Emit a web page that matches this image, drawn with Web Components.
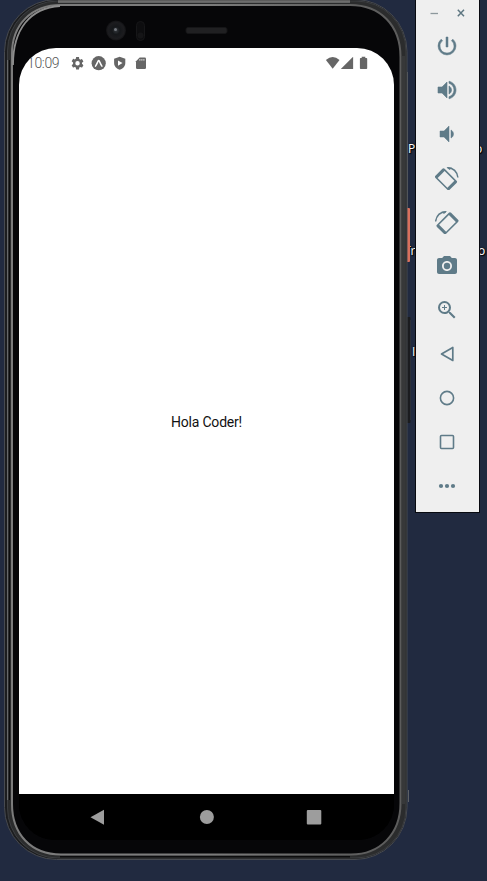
<!DOCTYPE html>
<html lang="es">
<head>
<meta charset="utf-8">
<title>Emulador</title>
<style>
html,body{margin:0;padding:0;width:487px;height:881px;overflow:hidden;background:#212a40}
</style>
</head>
<body>
<emulator-desktop>
  <desktop-label style="left:408px;top:141px">P</desktop-label>
  <desktop-label style="left:475px;top:141px">o</desktop-label>
  <desktop-label style="left:404px;top:243px">Tr</desktop-label>
  <desktop-label style="left:478px;top:243px">o</desktop-label>
  <desktop-label style="left:412px;top:344px">I</desktop-label>
  <phone-device>
    <status-bar slot="status" time="10:09"></status-bar>
    <span>Hola Coder!</span>
    <nav-bar slot="nav"></nav-bar>
  </phone-device>
  <emulator-toolbar>
    <tool-button name="power"></tool-button>
    <tool-button name="up"></tool-button>
    <tool-button name="down"></tool-button>
    <tool-button name="left"></tool-button>
    <tool-button name="right"></tool-button>
    <tool-button name="camera"></tool-button>
    <tool-button name="zoom"></tool-button>
    <tool-button name="back"></tool-button>
    <tool-button name="home"></tool-button>
    <tool-button name="overview"></tool-button>
    <tool-button name="more"></tool-button>
  </emulator-toolbar>
</emulator-desktop>
<script>
function define(name, render){
  customElements.define(name, class extends HTMLElement{
    connectedCallback(){
      if(this.shadowRoot) return;
      this.attachShadow({mode:'open'}).innerHTML = render(this);
    }
  });
}

define('emulator-desktop', () => `
<style>
:host{display:block;position:relative;width:487px;height:881px;overflow:hidden;background:#212a40;font-family:Roboto,"Liberation Sans",sans-serif}
</style><slot></slot>`);

define('desktop-label', () => `
<style>
:host{display:block;position:absolute;font:12px/15px "Open Sans","Noto Sans",sans-serif;color:#fff;text-shadow:1px 1px 1px #000,0 0 2px #000}
</style><slot></slot>`);

define('phone-device', () => `
<style>
:host{display:block;position:absolute;left:0;top:0;width:415px;height:881px}
.body{position:absolute;left:0;top:0}
.screen{position:relative;box-sizing:border-box;width:375px;height:792px;margin:48px 0 0 19px;display:flex;flex-direction:column;border-radius:37px 37px 36px 36px;overflow:hidden;background:#000}
main{flex:1;display:flex;align-items:center;justify-content:center;background:#fff;color:#111;font-size:14px;line-height:16px;padding-bottom:28px;letter-spacing:-.2px}
</style>
<svg class="body" width="415" height="881" viewBox="0 0 415 881">
  <defs>
    <linearGradient id="edge" x1="0" x2="1" y1="0" y2="0">
      <stop offset="0" stop-color="#7c7c7c"/><stop offset=".5" stop-color="#7c7c7c"/>
      <stop offset=".85" stop-color="#606060"/><stop offset="1" stop-color="#5c5c5c"/>
    </linearGradient>
    <radialGradient id="lens"><stop offset="0" stop-color="#34383d"/><stop offset=".4" stop-color="#15171a"/><stop offset=".8" stop-color="#1c1c1f"/><stop offset="1" stop-color="#111113"/></radialGradient>
  </defs>
  <path d="M407.500 72V208M408.500 790v12" stroke="#5d6065" fill="none"/>
  <rect x="406" y="317" width="4.500" height="106" rx="1" fill="#1b1c1f"/>
  <path d="M410.500 320v100" stroke="#2b2f38"/>
  <rect x="406" y="208" width="4" height="54" rx="1" fill="#d9705d"/>
  <rect x="4.500" y="-.5" width="402.500" height="860" rx="52" fill="#1c1d1f" stroke="#474a50"/>
  <rect x="7.500" y="1" width="398.500" height="857" rx="50" fill="#2b2c2d" stroke="#3c3e41"/>
  <path d="M58 .8H350" stroke="#6c6c6c" stroke-width="1.200"/>
  <path d="M58 2H350" stroke="#777" stroke-width="1.500"/>
  <path d="M7.500 60V800" stroke="#66686b"/>
  <path d="M9.500 60V800" stroke="#0d0d0e"/>
  <path d="M12 804V54C12 25 31 5 61 5H350C380 5 400.500 25 400.500 57V803C400.500 834 380 854.500 351 854.500H61C31 854.500 12 834 12 804Z" fill="#060608" stroke="url(#edge)" stroke-width="2"/>
  <path d="M13 65C13 29 30 8 60 6" fill="none" stroke="#8d8d8d" stroke-width="1.800"/>
  <path d="M403.500 56V804" stroke="#373839" stroke-width="3.500"/>
  <path d="M60 856.700H350" stroke="#0c0c0d" stroke-width="1.500"/>
  <circle cx="116" cy="30.500" r="10" fill="url(#lens)"/>
  <circle cx="115.500" cy="29.500" r="1.500" fill="#73777e"/>
  <rect x="136.500" y="21.500" width="8" height="19" rx="4" fill="#0d0d0f" stroke="#161618"/>
  <circle cx="140.500" cy="35.500" r="3" fill="#151517"/>
  <rect x="186" y="27.500" width="41" height="6" rx="2" fill="#202022" stroke="#151517"/>
</svg>
<div class="screen"><slot name="status"></slot><main><slot></slot></main><slot name="nav"></slot></div>`);

define('status-bar', el => `
<style>
:host{display:flex;height:30px;box-sizing:border-box;padding-left:8px;background:#fff;color:#555;font-size:14px;font-weight:300;line-height:31px}
time{width:43px;letter-spacing:-.35px;white-space:nowrap}
svg{display:block}
</style>
<time>${el.getAttribute('time')}</time>
<svg width="324" height="30" viewBox="70 48 324 30" fill="#666">
  <path transform="translate(70.100 55.800) scale(.62)" d="M19.140 12.940c.04-.3.060-.61.060-.94s-.02-.64-.07-.94l2.030-1.580a.49.49 0 0 0 .12-.61l-1.920-3.320a.49.49 0 0 0-.59-.22l-2.390.96a7 7 0 0 0-1.620-.94l-.36-2.540A.48.48 0 0 0 13.920 2h-3.840a.48.48 0 0 0-.48.410l-.36 2.540a7 7 0 0 0-1.620.94l-2.390-.96a.48.48 0 0 0-.59.220L2.720 8.470a.48.48 0 0 0 .12.610l2.030 1.580a6.500 6.500 0 0 0 0 2.680l-2.030 1.580a.49.49 0 0 0-.12.610l1.920 3.320c.12.220.37.290.59.220l2.390-.96c.5.380 1.030.7 1.620.94l.36 2.540c.05.240.24.410.48.410h3.840c.24 0 .44-.17.480-.41l.36-2.540a7 7 0 0 0 1.620-.94l2.390.96c.22.080.47 0 .59-.22l1.920-3.320a.48.48 0 0 0-.12-.61zM12 15.600a3.600 3.600 0 1 1 0-7.200 3.600 3.600 0 0 1 0 7.200z"/>
  <circle cx="98.700" cy="63.200" r="7.100"/>
  <path d="M95.500 66.100C96.700 64.600 97.400 62.500 98.200 60.900Q98.700 60.100 99.200 60.900C100 62.500 100.700 64.600 101.900 66.100" fill="none" stroke="#fff" stroke-width="1.500" stroke-linecap="round"/>
  <path d="M119.700 56.700l5.600 2v4.300c0 3.100-2.300 5.700-5.600 6.700-3.300-1-5.600-3.600-5.600-6.700v-4.300z"/>
  <path d="M118 60.400l4.500 2.700-4.500 2.700z" fill="#fff"/>
  <path d="M139.700 57.600h5q1.300 0 1.300 1.300v8.900q0 1.200-1.300 1.200h-7.400q-1.300 0-1.300-1.200v-6.500z"/>
  <path d="M139.900 59v1.700M141.900 59v1.700M143.900 59v1.700" stroke="#fff" stroke-width=".8"/>
  <path d="M332.700 68.700l-6.800-8.800q6.800-5.800 13.600 0z"/>
  <path d="M353.100 56.800v12.200h-12.300z"/>
  <path d="M361.700 58v-1.200h3.600V58h1.100q.8 0 .8.800v9.400q0 .8-.8.800h-5.700q-.8 0-.8-.8v-9.400q0-.8.800-.8z"/>
</svg>`);

define('nav-bar', () => `
<style>
:host{display:flex;flex:none;height:46px;box-sizing:border-box;padding:0 62px;justify-content:space-between;align-items:center;background:#000}
svg{fill:#9d9d9d}
</style>
<svg width="32" height="32"><path d="M9.500 16.200L23 8.800v15z"/></svg>
<svg width="32" height="32"><circle cx="15.900" cy="16" r="7"/></svg>
<svg width="32" height="32"><rect x="6.800" y="9" width="14.500" height="14.500" rx="1"/></svg>`);

define('emulator-toolbar', () => `
<style>
:host{position:absolute;left:415px;top:-1px;width:65px;height:514px;box-sizing:border-box;border:1px solid #080a10;background:#efefef;display:flex;flex-direction:column;align-items:center}
header{height:24px;flex:none;display:block}
svg{display:block}
</style>
<header><svg width="63" height="24" viewBox="416 0 63 24" fill="none">
<path d="M430.500 13.500h7.500" stroke="#8d989d" stroke-width="1.300"/>
<path d="M457.800 9.800l6.200 6.400M464 9.800l-6.200 6.400" stroke="#5d7681" stroke-width="1.500"/>
</svg></header><slot></slot>`);

/* Tilted handset with a curved arrow over its upper corner. */
const rotated = `<g transform="translate(11 13.300) rotate(45)">
<rect x="-10" y="-6.500" width="20" height="13" rx="1.600" fill="#5f7b88"/>
<rect x="-6.900" y="-4.900" width="13.800" height="9.800" fill="#efefef"/></g>
<path d="M12.500 1.700Q21.500 1.900 22.900 11.500" fill="none" stroke="#5f7b88" stroke-width="1.500"/>
<path d="M11.500 1l5.500.7-2.500 2.300z" fill="#5f7b88"/>`;
const icons = {
  power:'<path stroke="#5f7b88" stroke-width=".5" d="M13 3h-2v10h2V3zm4.830 2.170l-1.420 1.420A6.920 6.920 0 0 1 19 12c0 3.870-3.130 7-7 7A6.995 6.995 0 0 1 7.580 6.580L6.170 5.170A8.932 8.932 0 0 0 3 12a9 9 0 0 0 18 0c0-2.740-1.230-5.180-3.170-6.830z"/>',
  up:'<path stroke="#5f7b88" stroke-width=".6" d="M3 9v6h4l5 5V4L7 9H3zm13.500 3c0-1.770-1.020-3.290-2.500-4.030v8.050c1.480-.73 2.500-2.250 2.500-4.020zM14 3.230v2.060c2.890.86 5 3.540 5 6.710s-2.110 5.850-5 6.710v2.060c4.010-.91 7-4.490 7-8.770s-2.990-7.860-7-8.770z"/>',
  down:'<path stroke="#5f7b88" stroke-width=".5" d="M18.500 12c0-1.770-1.020-3.290-2.500-4.030v8.050c1.480-.73 2.500-2.250 2.500-4.020zM5 9v6h4l5 5V4L9 9H5z"/>',
  left:rotated,
  right:`<g transform="translate(23.500 0) scale(-1 1)">${rotated}</g>`,
  camera:'<circle cx="12" cy="12" r="3.200"/><path d="M9 2L7.170 4H4c-1.100 0-2 .9-2 2v12c0 1.100.9 2 2 2h16c1.100 0 2-.9 2-2V6c0-1.100-.9-2-2-2h-3.170L15 2H9zm3 15c-2.760 0-5-2.240-5-5s2.240-5 5-5 5 2.240 5 5-2.240 5-5 5z"/>',
  zoom:'<path d="M15.500 14h-.79l-.28-.27A6.471 6.471 0 0 0 16 9.500 6.500 6.500 0 1 0 9.500 16c1.610 0 3.090-.59 4.230-1.570l.27.28v.79l5 4.990L20.490 19l-4.990-5zm-6 0C7.010 14 5 11.990 5 9.500S7.010 5 9.500 5 14 7.010 14 9.500 11.990 14 9.500 14zm2.500-4h-2v2H9v-2H7V9h2V7h1v2h2v1z"/>',
  back:'<path d="M6.500 12L17.800 5.500v13z" fill="none" stroke="#5f7b88" stroke-width="1.700" stroke-linejoin="round"/>',
  home:'<circle cx="12" cy="12" r="6.600" fill="none" stroke="#5f7b88" stroke-width="1.600"/>',
  overview:'<rect x="5.500" y="5.500" width="13" height="13" rx="1" fill="none" stroke="#5f7b88" stroke-width="1.600"/>',
  more:'<circle cx="6" cy="12" r="2.100"/><circle cx="12" cy="12" r="2.100"/><circle cx="18" cy="12" r="2.100"/>'
};
define('tool-button', el => `
<style>
:host{display:flex;flex:none;width:63px;height:44px;align-items:center;justify-content:center}
svg{display:block;margin-left:-1px;fill:#5f7b88}
</style>
<svg width="24" height="24" viewBox="0 0 24 24">${icons[el.getAttribute('name')]}</svg>`);
</script>
</body>
</html>
